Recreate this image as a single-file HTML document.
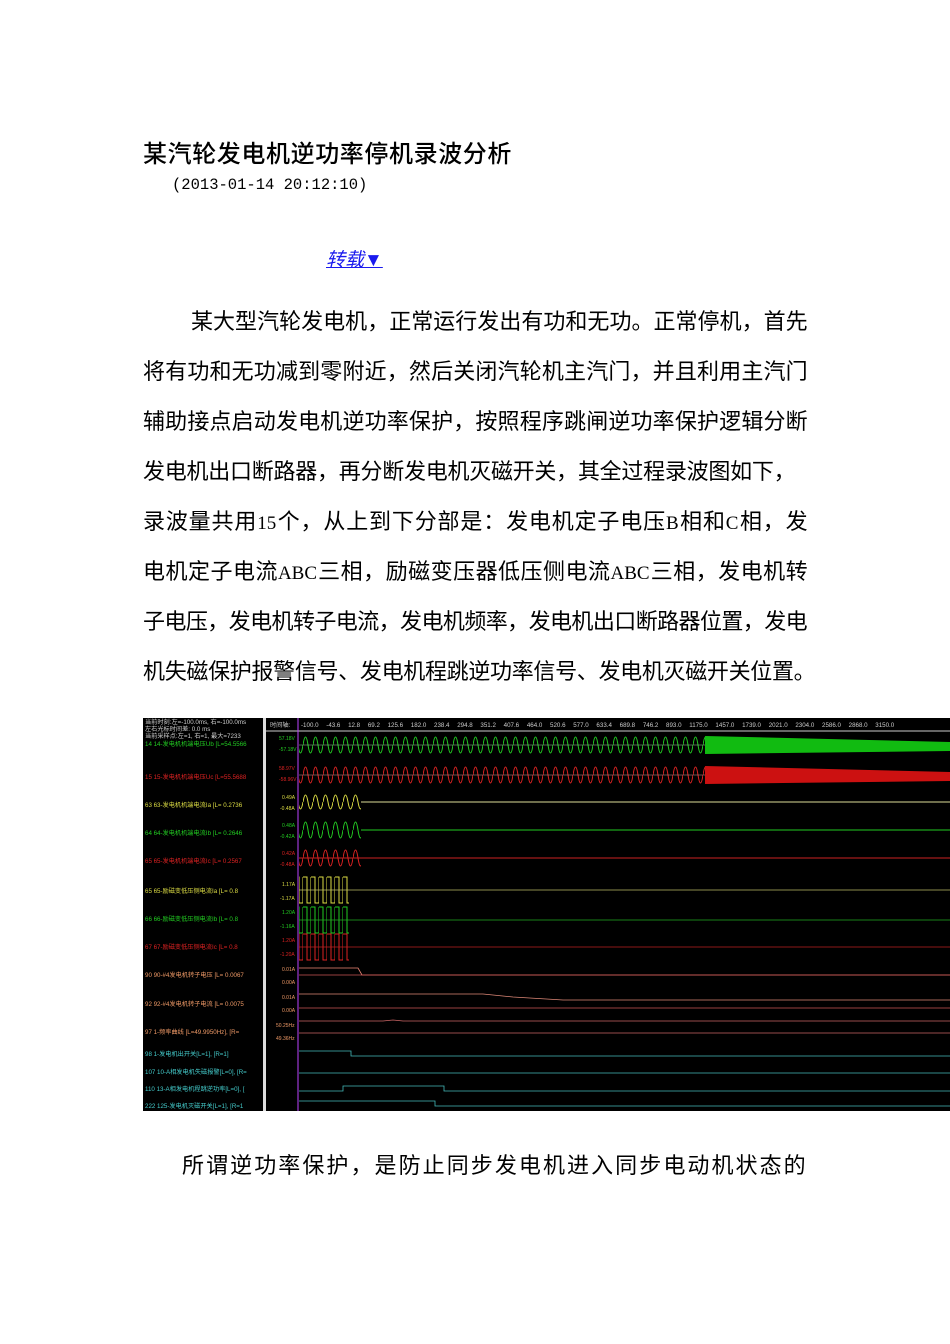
<!DOCTYPE html>
<html><head><meta charset="utf-8">
<style>
body{margin:0;background:#fff;width:950px;height:1344px;position:relative;overflow:hidden;font-family:"Liberation Sans","Noto Sans CJK SC",sans-serif;color:#000}
.t{position:absolute;left:143px;top:134px;font-size:24px;font-weight:500;letter-spacing:0.6px;white-space:nowrap}
.d{position:absolute;left:172px;top:176px;font-family:"Liberation Mono",monospace;font-size:15.5px;white-space:pre}
.z{position:absolute;left:326px;top:245px;font-size:19px;color:#1a1aee;font-style:italic;text-decoration:underline}
.l{position:absolute;left:143px;width:664px;font-size:22px;letter-spacing:-0.65px;line-height:30px;white-space:nowrap;text-align:justify;text-align-last:justify}
.l span{font-family:"Liberation Serif",serif;font-size:19px;letter-spacing:0}
</style></head><body>
<div class="t">某汽轮发电机逆功率停机录波分析</div>
<div class="d">(2013-01-14 20:12:10)</div>
<div class="z">转载<span style="font-style:normal">▼</span></div>
<div class="l" style="top:307px;left:191px;width:616px">某大型汽轮发电机，正常运行发出有功和无功。正常停机，首先</div>
<div class="l" style="top:357px">将有功和无功减到零附近，然后关闭汽轮机主汽门，并且利用主汽门</div>
<div class="l" style="top:407px">辅助接点启动发电机逆功率保护，按照程序跳闸逆功率保护逻辑分断</div>
<div class="l" style="top:457px;width:652px">发电机出口断路器，再分断发电机灭磁开关，其全过程录波图如下，</div>
<div class="l" style="top:507px">录波量共用<span>15</span>个，从上到下分部是：发电机定子电压<span>B</span>相和<span>C</span>相，发</div>
<div class="l" style="top:557px">电机定子电流<span>ABC</span>三相，励磁变压器低压侧电流<span>ABC</span>三相，发电机转</div>
<div class="l" style="top:607px">子电压，发电机转子电流，发电机频率，发电机出口断路器位置，发电</div>
<div class="l" style="top:657px;width:672px">机失磁保护报警信号、发电机程跳逆功率信号、发电机灭磁开关位置。</div>
<div class="l" style="top:1151px;left:182px;width:623px">所谓逆功率保护，是防止同步发电机进入同步电动机状态的</div>

<svg style="position:absolute;left:143px;top:718px" width="807" height="393" viewBox="0 0 807 393">
<defs>
<pattern id="s" width="10" height="24" patternUnits="userSpaceOnUse"><path d="M0 12 Q2.5 -4 5 12 T10 12" fill="none" stroke="#2c2" stroke-width="1"/></pattern>
<pattern id="r" width="10" height="24" patternUnits="userSpaceOnUse"><path d="M0 12 Q2.5 -4 5 12 T10 12" fill="none" stroke="#d22" stroke-width="1"/></pattern>
<pattern id="y" width="10" height="24" patternUnits="userSpaceOnUse"><path d="M0 12 Q2.5 -2 5 12 T10 12" fill="none" stroke="#dd4" stroke-width="1"/></pattern>
<pattern id="sy" width="8" height="30" patternUnits="userSpaceOnUse"><path d="M0 2 H4 V28 H8 V2" fill="none" stroke="#dd4" stroke-width="1"/></pattern>
<pattern id="sg" width="8" height="30" patternUnits="userSpaceOnUse"><path d="M0 2 H4 V28 H8 V2" fill="none" stroke="#2c2" stroke-width="1"/></pattern>
<pattern id="sr" width="8" height="30" patternUnits="userSpaceOnUse"><path d="M0 2 H4 V28 H8 V2" fill="none" stroke="#d22" stroke-width="1"/></pattern>
</defs>
<rect width="807" height="393" fill="#000"/>
<rect x="120" y="0" width="3" height="393" fill="#ddd"/>
<line x1="123" y1="13" x2="807" y2="13" stroke="#ccc"/>
<line x1="155" y1="0" x2="155" y2="393" stroke="#b4f" stroke-width="1"/>
<g font-size="6.2" fill="#ccc" font-family="Liberation Sans,Noto Sans CJK SC,sans-serif">
<text x="127" y="9">时间轴:</text>
<text x="158" y="9" word-spacing="6">-100.0 -43.6 12.8 69.2 125.6 182.0 238.4 294.8 351.2 407.6 464.0 520.6 577.0 633.4 689.8 746.2 893.0 1175.0 1457.0 1739.0 2021.0 2304.0 2586.0 2868.0 3150.0</text>
<text x="2" y="6">当前时刻:左=-100.0ms, 右=-100.0ms</text>
<text x="2" y="13">左右光标时间差: 0.0 ms</text>
<text x="2" y="20">当前采样点:左=1, 右=1, 最大=7233</text>
<text x="2" y="28" fill="#2c2">14 14-发电机机端电压Ub [L=54.5566</text>
<text x="2" y="61" fill="#d22">15 15-发电机机端电压Uc [L=55.5688</text>
<text x="2" y="89" fill="#dd4">63 63-发电机机端电流Ia [L= 0.2736</text>
<text x="2" y="117" fill="#2c2">64 64-发电机机端电流Ib [L= 0.2646</text>
<text x="2" y="145" fill="#d22">65 65-发电机机端电流Ic [L= 0.2567</text>
<text x="2" y="175" fill="#dd4">65 65-励磁变低压侧电流Ia [L= 0.8</text>
<text x="2" y="203" fill="#2c2">66 66-励磁变低压侧电流Ib [L= 0.8</text>
<text x="2" y="231" fill="#d22">67 67-励磁变低压侧电流Ic [L= 0.8</text>
<text x="2" y="259" fill="#e96">90 90-#4发电机转子电压 [L= 0.0067</text>
<text x="2" y="288" fill="#e96">92 92-#4发电机转子电流 [L= 0.0075</text>
<text x="2" y="316" fill="#e96">97 1-频率曲线 [L=49.9950Hz], [R=</text>
<text x="2" y="338" fill="#4cc">98 1-发电机出开关[L=1], [R=1]</text>
<text x="2" y="356" fill="#4cc">107 10-A相发电机失磁报警[L=0], [R=</text>
<text x="2" y="373" fill="#4cc">110 13-A相发电机程跳逆功率[L=0], [</text>
<text x="2" y="390" fill="#4cc">222 125-发电机灭磁开关[L=1], [R=1</text>
<g font-size="5">
<text x="136" y="22" fill="#2c2">57.18V</text><text x="136" y="33" fill="#2c2">-57.18V</text>
<text x="136" y="52" fill="#d22">58.97V</text><text x="136" y="63" fill="#d22">-58.96V</text>
<text x="139" y="81" fill="#dd4">0.49A</text><text x="137" y="92" fill="#dd4">-0.48A</text>
<text x="139" y="109" fill="#2c2">0.48A</text><text x="137" y="120" fill="#2c2">-0.42A</text>
<text x="139" y="137" fill="#d22">0.42A</text><text x="137" y="148" fill="#d22">-0.48A</text>
<text x="139" y="168" fill="#dd4">1.17A</text><text x="137" y="182" fill="#dd4">-1.17A</text>
<text x="139" y="196" fill="#2c2">1.20A</text><text x="137" y="210" fill="#2c2">-1.16A</text>
<text x="139" y="224" fill="#d22">1.20A</text><text x="137" y="238" fill="#d22">-1.20A</text>
<text x="139" y="253" fill="#e96">0.01A</text><text x="139" y="266" fill="#e96">0.00A</text>
<text x="139" y="281" fill="#e96">0.01A</text><text x="139" y="294" fill="#e96">0.00A</text>
<text x="133" y="309" fill="#e96">50.25Hz</text><text x="133" y="322" fill="#e96">49.36Hz</text>
</g></g>
<g transform="translate(0,15)"><rect x="156" y="0" width="406" height="24" fill="url(#s)"/></g>
<line x1="156" y1="27" x2="807" y2="27" stroke="#9c9" stroke-width="0.5"/>
<polygon points="562,18 807,24 807,33 562,36" fill="#1b1"/>
<g transform="translate(0,45)"><rect x="156" y="0" width="406" height="24" fill="url(#r)"/></g>
<line x1="156" y1="57" x2="807" y2="57" stroke="#c99" stroke-width="0.5"/>
<polygon points="562,48 807,54 807,63 562,66" fill="#c11"/>
<g transform="translate(0,72)"><rect x="156" y="0" width="62" height="24" fill="url(#y)"/></g>
<line x1="218" y1="84" x2="807" y2="84" stroke="#dd9" stroke-width="1"/>
<g transform="translate(0,100)"><rect x="156" y="0" width="62" height="24" fill="url(#s)"/></g>
<line x1="218" y1="112" x2="807" y2="112" stroke="#2c2" stroke-width="1"/>
<g transform="translate(0,128)"><rect x="156" y="0" width="62" height="24" fill="url(#r)"/></g>
<line x1="156" y1="140" x2="807" y2="140" stroke="#c22" stroke-width="1"/>
<g transform="translate(0,157)"><rect x="156" y="0" width="50" height="30" fill="url(#sy)"/></g>
<line x1="156" y1="172" x2="807" y2="172" stroke="#bb6" stroke-width="0.8"/>
<g transform="translate(0,187)"><rect x="156" y="0" width="50" height="30" fill="url(#sg)"/></g>
<line x1="156" y1="202" x2="807" y2="202" stroke="#2a2" stroke-width="0.8"/>
<g transform="translate(0,214)"><rect x="156" y="0" width="50" height="30" fill="url(#sr)"/></g>
<line x1="156" y1="229" x2="807" y2="229" stroke="#b22" stroke-width="0.8"/>
<g fill="none" stroke-width="0.8">
<path d="M156 250 H215 L219 257 H807" stroke="#e87"/>
<line x1="156" y1="257" x2="807" y2="257" stroke="#c55"/>
<path d="M156 276 H340 L370 279 L420 282 H807" stroke="#d87"/>
<line x1="156" y1="290" x2="807" y2="290" stroke="#c55"/>
<path d="M156 303 H240 L250 302 L260 303 H807" stroke="#c66"/>
<line x1="156" y1="315" x2="807" y2="315" stroke="#c66"/>
<path d="M156 333 H208 V338 H807" stroke="#4bb"/>
<line x1="156" y1="355" x2="807" y2="355" stroke="#4bb"/>
<path d="M156 373 H200 V368 H301 V373 H807" stroke="#4bb"/>
<path d="M156 383 H292 V388 H807" stroke="#4bb"/>
</g>
</svg>
</body></html>
